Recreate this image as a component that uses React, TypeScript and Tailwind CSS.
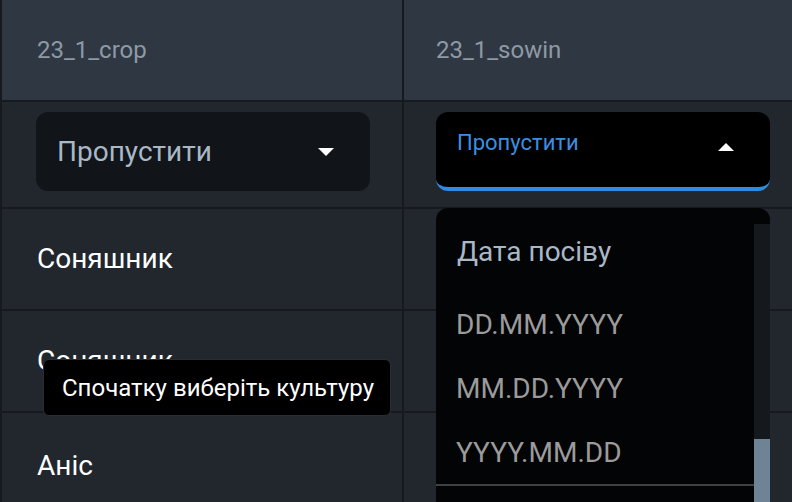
import React from 'react';

const rows = ['Соняшник', 'Соняшник', 'Аніс'];
const formats = ['DD.MM.YYYY', 'MM.DD.YYYY', 'YYYY.MM.DD'];

function Caret({ up }: { up?: boolean }) {
  return (
    <svg width="16" height="8" viewBox="0 0 16 8" className="fill-white">
      {up ? <path d="M0 8 L8 0 L16 8 Z" /> : <path d="M0 0 L8 8 L16 0 Z" />}
    </svg>
  );
}

export default function App() {
  return (
    <div className="relative h-[502px] w-[792px] overflow-hidden bg-[#1d2127] font-['Roboto',sans-serif]">
      <div className="grid w-[812px] grid-cols-[400px_400px] gap-x-[2px] gap-y-[2px] bg-[#161a1f] pl-[2px]">
        {/* header */}
        <div className="flex h-[100px] items-center bg-[#2f3742] pl-[35px] text-[24px] text-[#8e99a6]">23_1_crop</div>
        <div className="flex h-[100px] items-center bg-[#2f3742] pl-[32px] text-[24px] text-[#8e99a6]">23_1_sowin</div>

        {/* select row */}
        <div className="h-[105px] bg-[#22272e] pl-[34px] pt-[10px]">
          <div className="flex h-[79px] w-[334px] items-center justify-between rounded-[12px] bg-[#111418] pl-[21px] pr-[36px]">
            <span className="text-[28px] text-[#a9b8c7]">Пропустити</span>
            <Caret />
          </div>
        </div>
        <div className="h-[105px] bg-[#22272e] pl-[32px] pt-[10px]">
          <div className="flex h-[79px] w-[334px] items-center justify-between rounded-[12px] border-b-[4px] border-[#2f8ae6] bg-black pb-[14px] pl-[21px] pr-[36px]">
            <span className="text-[22px] text-[#3b8fe2]">Пропустити</span>
            <span className="pt-[8px]"><Caret up /></span>
          </div>
        </div>

        {rows.map((r, i) => (
          <React.Fragment key={i}>
            <div className={`flex items-center bg-[#22272e] pl-[35px] text-[28px] text-white ${i === 2 ? 'h-[105px]' : 'h-[100px]'}`}>{r}</div>
            <div className={`bg-[#22272e] ${i === 2 ? 'h-[105px]' : 'h-[100px]'}`} />
          </React.Fragment>
        ))}
      </div>

      {/* dropdown menu */}
      <div className="absolute left-[436px] top-[208px] flex h-[310px] w-[334px] overflow-hidden rounded-t-[12px] bg-[#030405]">
        <div className="flex flex-1 flex-col">
          <div className="flex h-[85px] items-center pl-[21px] pt-[3px] text-[28px] text-[#a9b8c7]">Дата посіву</div>
          {formats.map((f) => (
            <div key={f} className="flex h-[64px] items-center pl-[20px] text-[28px] text-[#9b9b9b]">{f}</div>
          ))}
          <div className="mt-[-1px] h-[2px] bg-[#3f4245]" />
        </div>
        <div className="mt-[16px] flex w-[16px] flex-col bg-[#15181c]">
          <div className="h-[215px]" />
          <div className="flex-1 bg-[#6f8397]" />
        </div>
      </div>

      {/* tooltip */}
      <div className="absolute left-[43px] top-[359px] flex h-[57px] w-[348px] items-center rounded-[6px] border border-[#2a2e33] bg-black pl-[18px] text-[24px] text-white">
        Спочатку виберіть культуру
      </div>
    </div>
  );
}
